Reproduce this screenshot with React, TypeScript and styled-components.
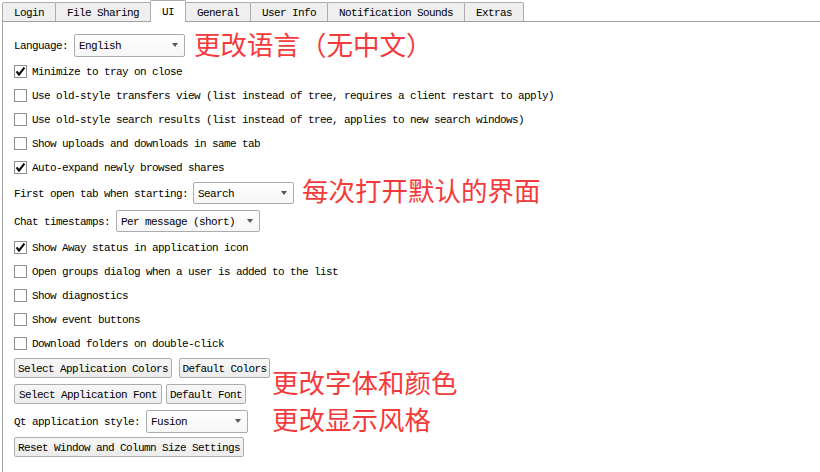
import React from "react";
import styled, { createGlobalStyle } from "styled-components";

const Global = createGlobalStyle`
  html, body { margin: 0; padding: 0; background: #fff; }
  body { font-family: "Liberation Mono", "DejaVu Sans Mono", monospace; }
`;

const Window = styled.div`
  position: relative;
  width: 820px;
  height: 472px;
  overflow: hidden;
  background: #fff;
  font-family: "Liberation Mono", "DejaVu Sans Mono", monospace;
  font-size: 11px;
  letter-spacing: -0.6px;
  color: #000;
`;

const TabBar = styled.div`
  position: relative;
  z-index: 1;
  display: flex;
  align-items: flex-end;
  height: 21px;
  padding-left: 2px;
`;

const Tab = styled.div<{ $active?: boolean }>`
  box-sizing: border-box;
  position: relative;
  z-index: ${(p) => (p.$active ? 2 : 1)};
  display: flex;
  align-items: center;
  justify-content: center;
  height: ${(p) => (p.$active ? 22 : 19)}px;
  margin-bottom: ${(p) => (p.$active ? -1 : 0)}px;
  margin-right: -1px;
  padding: 1px 11px 0 11px;
  border: 1px solid #acacac;
  border-bottom: none;
  border-radius: 2px 2px 0 0;
  background: ${(p) => (p.$active ? "#ffffff" : "#efefef")};
  white-space: nowrap;
`;

const Pane = styled.div`
  box-sizing: border-box;
  display: flex;
  flex-direction: column;
  height: 460px;
  margin-left: 2px;
  padding: 12px 0 0 11px;
  border-top: 1px solid #a0a0a0;
  border-left: 1px solid #a0a0a0;
`;

const Row = styled.div<{ $h: number; $gap?: number; $mt?: number }>`
  display: flex;
  align-items: center;
  flex-shrink: 0;
  height: ${(p) => p.$h}px;
  gap: ${(p) => p.$gap ?? 6}px;
  margin-top: ${(p) => p.$mt ?? 0}px;
  white-space: nowrap;
`;

const Label = styled.span`
  padding-top: 2px;
`;

const Box = styled.span`
  box-sizing: border-box;
  display: inline-flex;
  align-items: center;
  justify-content: center;
  width: 13px;
  height: 13px;
  margin-top: 1px;
  border: 1px solid #8f8f8f;
  background: #fff;
  flex-shrink: 0;
`;

const Combo = styled.div<{ $w: number; $h: number }>`
  box-sizing: border-box;
  display: flex;
  align-items: center;
  width: ${(p) => p.$w}px;
  height: ${(p) => p.$h}px;
  padding: 2px 0 0 4px;
  border: 1px solid #acacac;
  border-radius: 2px;
  background: linear-gradient(#ffffff, #f6f6f6);
`;

const Arrow = styled.span`
  margin-left: auto;
  margin-right: 6px;
  margin-top: -2px;
  width: 0;
  height: 0;
  border-left: 3.5px solid transparent;
  border-right: 3.5px solid transparent;
  border-top: 4px solid #555;
`;

const Button = styled.div<{ $w: number }>`
  box-sizing: border-box;
  display: flex;
  align-items: center;
  justify-content: center;
  width: ${(p) => p.$w}px;
  height: 20px;
  padding-top: 2px;
  border: 1px solid #adadad;
  border-radius: 2px;
  background: linear-gradient(#f7f7f7, #ececec);
`;

const Note = styled.span`
  font-family: "Noto Sans CJK SC", "Noto Sans", sans-serif;
  font-size: 26.5px;
  line-height: 26px;
  letter-spacing: 0;
  color: #f43b3b;
  white-space: nowrap;
`;

const InlineNote = styled(Note)<{ $dy?: number }>`
  margin-left: 3px;
  position: relative;
  top: ${(p) => p.$dy ?? 0}px;
`;

const NoteStack = styled.div`
  position: absolute;
  left: 272px;
  top: 369px;
  display: flex;
  flex-direction: column;
  gap: 11px;
`;

const Check = ({ checked }: { checked?: boolean }) => (
  <Box>
    {checked && (
      <svg width="11" height="11" viewBox="0 0 11 11">
        <path d="M1.6 5.4 L4 8.6 L9.4 1.6" fill="none" stroke="#000" strokeWidth="2" />
      </svg>
    )}
  </Box>
);

const CheckRow = ({ label, checked, mt }: { label: string; checked?: boolean; mt?: number }) => (
  <Row $h={24} $gap={5} $mt={mt}>
    <Check checked={checked} />
    <Label>{label}</Label>
  </Row>
);

const tabs = ["Login", "File Sharing", "UI", "General", "User Info", "Notification Sounds", "Extras"];

export default function App() {
  return (
    <Window>
      <Global />
      <TabBar>
        {tabs.map((t) => (
          <Tab key={t} $active={t === "UI"}>
            {t}
          </Tab>
        ))}
      </TabBar>
      <Pane>
        <Row $h={22}>
          <Label>Language:</Label>
          <Combo $w={111} $h={23}>
            English
            <Arrow />
          </Combo>
          <InlineNote $dy={-1}>更改语言（无中文）</InlineNote>
        </Row>
        <CheckRow label="Minimize to tray on close" checked mt={3} />
        <CheckRow label="Use old-style transfers view (list instead of tree, requires a client restart to apply)" />
        <CheckRow label="Use old-style search results (list instead of tree, applies to new search windows)" />
        <CheckRow label="Show uploads and downloads in same tab" />
        <CheckRow label="Auto-expand newly browsed shares" checked />
        <Row $h={27} $gap={5}>
          <Label>First open tab when starting:</Label>
          <Combo $w={101} $h={22}>
            Search
            <Arrow />
          </Combo>
          <InlineNote $dy={-3}>每次打开默认的界面</InlineNote>
        </Row>
        <Row $h={29}>
          <Label>Chat timestamps:</Label>
          <Combo $w={144} $h={22}>
            Per message (short)
            <Arrow />
          </Combo>
        </Row>
        <CheckRow label="Show Away status in application icon" checked />
        <CheckRow label="Open groups dialog when a user is added to the list" />
        <CheckRow label="Show diagnostics" />
        <CheckRow label="Show event buttons" />
        <CheckRow label="Download folders on double-click" />
        <Row $h={26} $gap={7}>
          <Button $w={158}>Select Application Colors</Button>
          <Button $w={91}>Default Colors</Button>
        </Row>
        <Row $h={25} $gap={4}>
          <Button $w={148}>Select Application Font</Button>
          <Button $w={80}>Default Font</Button>
        </Row>
        <Row $h={30}>
          <Label>Qt application style:</Label>
          <Combo $w={102} $h={23}>
            Fusion
            <Arrow />
          </Combo>
        </Row>
        <Row $h={21}>
          <Button $w={230}>Reset Window and Column Size Settings</Button>
        </Row>
      </Pane>
      <NoteStack>
        <Note>更改字体和颜色</Note>
        <Note>更改显示风格</Note>
      </NoteStack>
    </Window>
  );
}
